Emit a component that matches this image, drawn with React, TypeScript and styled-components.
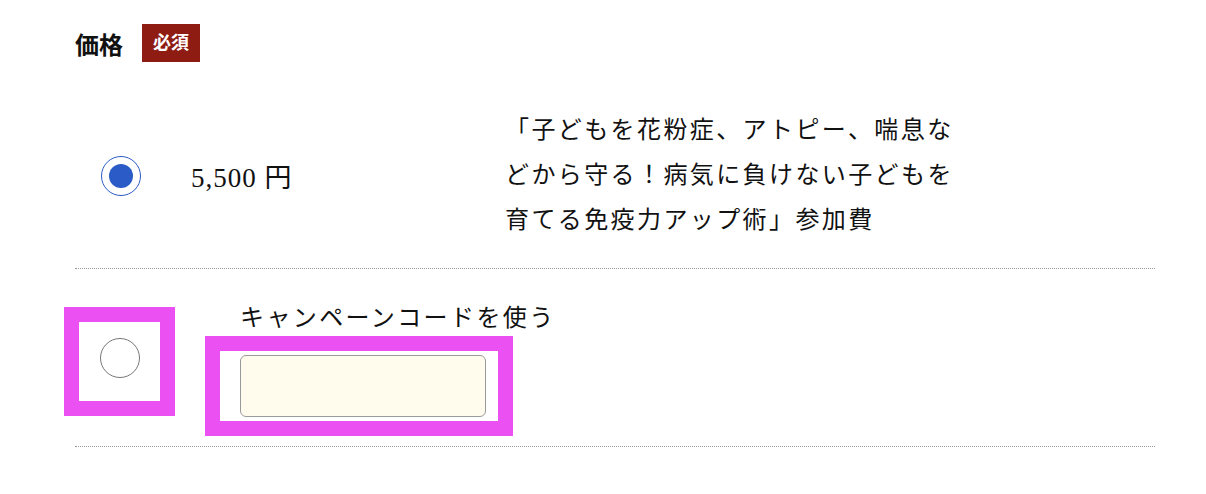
import React, { useState } from "react";
import styled, { createGlobalStyle } from "styled-components";

const GlobalStyle = createGlobalStyle`
  body {
    margin: 0;
    background: #fff;
    color: #111;
    font-family: "Liberation Serif", "Noto Sans CJK JP", serif;
  }
`;

const Page = styled.div`
  padding: 24px 51px 0 75px;
`;

const Header = styled.div`
  display: flex;
  align-items: center;
  gap: 19px;
  height: 38px;
`;

const HeaderTitle = styled.span`
  font-size: 24px;
  font-weight: bold;
`;

const Badge = styled.span`
  background: #8e1c13;
  color: #fff;
  font-size: 18px;
  font-weight: bold;
  line-height: 38px;
  padding: 0 11px;
`;

const OptionRow = styled.div<{ $top?: boolean }>`
  display: flex;
  align-items: ${(p) => (p.$top ? "flex-start" : "center")};
  border-bottom: 1px dotted #999;
  padding: ${(p) => (p.$top ? "31px 0 10px" : "46px 0 25px")};
`;

const RadioCell = styled.div`
  width: 116px;
  padding-left: 26px;
  box-sizing: border-box;
`;

const Radio = styled.span<{ $checked?: boolean }>`
  display: flex;
  align-items: center;
  justify-content: center;
  width: 40px;
  height: 40px;
  box-sizing: border-box;
  border-radius: 50%;
  border: 1px solid ${(p) => (p.$checked ? "#2a5bc6" : "#777")};
  background: #fff;
  cursor: pointer;

  &::after {
    content: "";
    width: 24px;
    height: 24px;
    border-radius: 50%;
    background: ${(p) => (p.$checked ? "#2a5bc6" : "transparent")};
  }
`;

const Price = styled.div`
  width: 314px;
  font-size: 27px;
  letter-spacing: 1px;
`;

const Description = styled.div`
  width: 460px;
  font-size: 24px;
  line-height: 45px;
  letter-spacing: 0.1em;
`;

/* highlighted frames around the campaign option */
const Highlight = styled.div<{ $pad: string }>`
  border: 15px solid #eb51f2;
  padding: ${(p) => p.$pad};
`;

const RadioFrame = styled(Highlight)`
  margin-left: -11px;
  margin-top: 7px;
`;

const CampaignCol = styled.div`
  display: flex;
  flex-direction: column;
  align-items: flex-start;
  margin-left: 30px;
`;

const CampaignLabel = styled.div`
  margin-left: 35px;
  font-size: 24px;
  line-height: 36px;
  letter-spacing: 0.1em;
`;

const CodeInput = styled.input`
  display: block;
  width: 246px;
  height: 62px;
  box-sizing: border-box;
  border: 1px solid #9a9a9a;
  border-radius: 6px;
  background: #fffcee;
  font-size: 20px;
  padding: 0 10px;

  &:focus {
    outline: none;
    border-color: #2a5bc6;
  }
`;

const App: React.FC = () => {
  const [choice, setChoice] = useState<"price" | "code">("price");
  const [code, setCode] = useState("");

  return (
    <Page>
      <GlobalStyle />
      <Header>
        <HeaderTitle>価格</HeaderTitle>
        <Badge>必須</Badge>
      </Header>

      <OptionRow>
        <RadioCell>
          <Radio $checked={choice === "price"} onClick={() => setChoice("price")} />
        </RadioCell>
        <Price>5,500 円</Price>
        <Description>
          「子どもを花粉症、アトピー、喘息などから守る！病気に負けない子どもを育てる免疫力アップ術」参加費
        </Description>
      </OptionRow>

      <OptionRow $top>
        <RadioFrame $pad="16px 20px 23px 21px">
          <Radio $checked={choice === "code"} onClick={() => setChoice("code")} />
        </RadioFrame>
        <CampaignCol>
          <CampaignLabel>キャンペーンコードを使う</CampaignLabel>
          <Highlight $pad="4px 12px 4px 20px">
            <CodeInput
              type="text"
              value={code}
              onChange={(e) => setCode(e.target.value)}
              onFocus={() => setChoice("code")}
            />
          </Highlight>
        </CampaignCol>
      </OptionRow>
    </Page>
  );
};

export default App;
